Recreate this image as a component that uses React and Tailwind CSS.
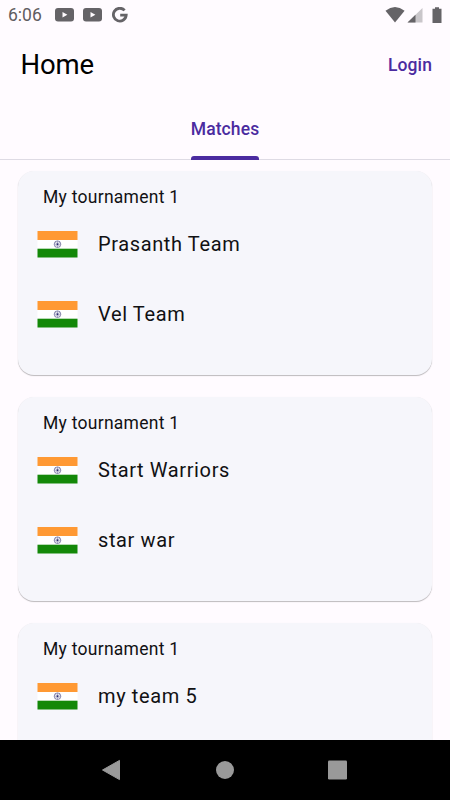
import React from 'react';

const matches = [
  { id: 1, tournament: 'My tournament 1', teams: ['Prasanth Team', 'Vel Team'] },
  { id: 2, tournament: 'My tournament 1', teams: ['Start Warriors', 'star war'] },
  { id: 3, tournament: 'My tournament 1', teams: ['my team 5'] },
];

function YoutubeIcon() {
  return (
    <svg className="h-[14px] w-[19px]" viewBox="0 0 19 14">
      <rect width="19" height="13.6" rx="3" fill="#656367" />
      <path d="M7.5 4 L12.4 6.8 L7.5 9.6 Z" fill="#fffbff" />
    </svg>
  );
}

function GoogleIcon() {
  return (
    <svg className="h-4 w-4" viewBox="0 0 16 16" fill="none" stroke="#656367" strokeWidth="2.8">
      <path d="M12.6 3.4 A6.4 6.4 0 1 0 14.2 8.1 H8.2" />
    </svg>
  );
}

function StatusBar() {
  return (
    <div className="flex h-[30px] items-center pl-2 pr-[7px]">
      <span className="w-[47px] text-[17.5px] leading-[30px] text-[#5f5d61]">6:06</span>
      <div className="flex items-center gap-[8.5px]">
        <YoutubeIcon />
        <YoutubeIcon />
      </div>
      <div className="ml-[10px]">
        <GoogleIcon />
      </div>
      <svg className="ml-auto h-[17px] w-[58px]" viewBox="0 0 58 17">
        <path d="M0.5 3.7 Q10 -3.7 19.6 3.7 L10 15.5 Z" fill="#656367" />
        <path d="M37.5 1 V15.5 H22.5 Z" fill="#c9c6ca" />
        <path d="M30.5 7.8 V15.5 H22.5 Z" fill="#656367" />
        <path d="M47.5 1.7 H50 V0.3 H54 V1.7 H56.5 V16 H47.5 Z" fill="#656367" />
      </svg>
    </div>
  );
}

function Flag() {
  return (
    <svg className="h-7 w-[41px] shrink-0" viewBox="-0.5 -1 41 28">
      <rect width="40" height="9" fill="#ff9933" />
      <rect y="9" width="40" height="9" fill="#ffffff" />
      <rect y="17.7" width="40" height="8.8" fill="#138808" />
      <g stroke="#22226b" fill="none" opacity="0.75">
        <circle cx="20" cy="13.2" r="3.3" strokeWidth="0.7" />
        <path d="M20 10.1 V16.3 M16.9 13.2 H23.1 M17.8 11 L22.2 15.4 M22.2 11 L17.8 15.4" strokeWidth="0.5" />
      </g>
      <circle cx="20" cy="13.2" r="0.8" fill="#22226b" />
    </svg>
  );
}

function MatchCard({ match }) {
  return (
    <div className="h-[204.3px] shrink-0 rounded-[16px] bg-[#f6f6fb] pt-[13.5px] shadow-[0_1px_1px_rgba(0,0,0,0.26),0_0_1px_rgba(0,0,0,0.06)]">
      <div className="pl-[25.5px] text-[17.5px] leading-6 tracking-[0.27px] text-[#111113]">
        {match.tournament}
      </div>
      {match.teams.map((team) => (
        <div key={team} className="flex h-[70px] items-center pl-[19.5px]">
          <Flag />
          <span className="ml-5 text-[20px] tracking-[0.62px] text-[#111113]">{team}</span>
        </div>
      ))}
    </div>
  );
}

export default function App() {
  return (
    <div className="flex h-[800px] w-[450px] flex-col overflow-hidden bg-[#fffbff] font-['Roboto',sans-serif]">
      <StatusBar />
      <header className="flex h-[70px] shrink-0 items-center justify-between pl-[20.5px] pr-[18px]">
        <h1 className="text-[27.5px] tracking-[-0.1px] text-black">Home</h1>
        <button className="text-[17.5px] font-medium tracking-[0.1px] text-[#4b2ba0]">Login</button>
      </header>
      <nav className="flex h-[60px] shrink-0 justify-center border-b border-[#dedbe4]">
        <div className="flex h-[60px] flex-col justify-between text-[17.5px] font-medium tracking-[0.1px] text-[#4b2ba0]">
          <span className="pt-4">Matches</span>
          <span className="h-1 rounded-t-[3px] bg-[#4b2ba0]" />
        </div>
      </nav>
      <main className="flex min-h-0 flex-1 flex-col gap-[21.8px] overflow-hidden pl-[17.5px] pr-[17.6px] pt-[11px]">
        {matches.map((match) => (
          <MatchCard key={match.id} match={match} />
        ))}
      </main>
      <footer className="flex h-[60px] shrink-0 items-center justify-center bg-black">
        <svg className="h-6 w-[260px]" viewBox="0 0 260 24" fill="#999999">
          <path d="M7.5 12 L24.5 2.4 V21.6 Z" stroke="#999999" strokeLinejoin="round" />
          <circle cx="130" cy="12" r="9" />
          <rect x="233" y="2.5" width="19" height="19" rx="1.2" />
        </svg>
      </footer>
    </div>
  );
}
